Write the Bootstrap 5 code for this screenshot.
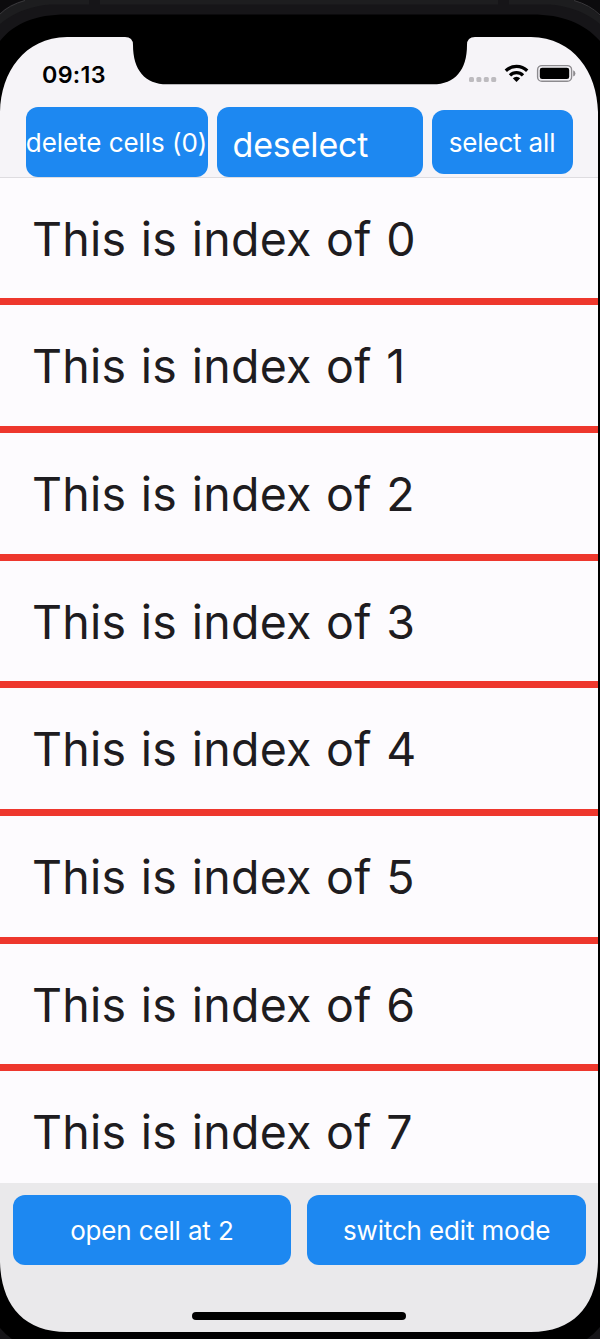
<!DOCTYPE html>
<html lang="en">
<head>
<meta charset="utf-8">
<meta name="viewport" content="width=device-width, initial-scale=1">
<title>Cell list</title>
<link href="https://cdn.jsdelivr.net/npm/bootstrap@5.3.0/dist/css/bootstrap.min.css" rel="stylesheet">
<style>
  body { background: #000; font-family: Inter, sans-serif; }
  .phone { width: 600px; height: 1339px; padding: 37px 2px 7px 0; background: #000; }
  .screen { background: #fdfbfe; }
  .topbar { height: 140.5px; background: #f6f4f8; border-bottom: 1px solid #dedce0; }
  .status { height: 70px; padding: 0 20px 0 42px; }
  .clock { font-size: 23.3px; font-weight: 600; line-height: 75px; letter-spacing: .3px; color: #000; }
  .status-icons { margin-top: 25px; }
  .actions { padding: 0 25px 0 25.5px; gap: 9px; }
  .act { --bs-btn-color: #fff; --bs-btn-bg: #1d88f1; --bs-btn-border-width: 0; --bs-btn-border-radius: 12px;
         --bs-btn-padding-x: 0; --bs-btn-padding-y: 0; --bs-btn-font-size: 26px; --bs-btn-line-height: 72px;
         height: 70px; white-space: nowrap; font-weight: 400; letter-spacing: -.15px; }
  .act-delete { width: 182px; letter-spacing: -.05px; }
  .act-deselect { width: 206px; padding-left: 16px; --bs-btn-font-size: 34px; --bs-btn-line-height: 75px; }
  .act-all { width: 141px; height: 64px; --bs-btn-line-height: 66px; }
  .cell-row { height: 127.7px; flex: none; padding-left: 32px; border-bottom: 7px solid #ee372d;
              font-size: 46.5px; line-height: 122px; letter-spacing: .25px; word-spacing: 1.2px;
              color: #1e1c20; white-space: nowrap; }
  .bottombar { height: 149px; background: #eae9eb; padding: 12px 12px 0 12.5px; }
  .home { width: 214px; height: 8px; margin: 47px auto 0; background: #000; }
</style>
</head>
<body>
<div class="phone position-relative overflow-hidden">
  <div class="screen h-100 d-flex flex-column overflow-hidden">
    <header class="topbar flex-shrink-0">
      <div class="status d-flex justify-content-between">
        <span class="clock">09:13</span>
        <svg width="110" height="24" viewBox="468 62 110 24" class="status-icons">
          <g fill="#bdbbbf"><rect x="469" y="77" width="5" height="5" rx="1.5"/><rect x="476.4" y="77" width="5" height="5" rx="1.5"/><rect x="483.8" y="77" width="5" height="5" rx="1.5"/><rect x="491.2" y="77" width="5" height="5" rx="1.5"/></g>
          <g fill="none" stroke="#000" stroke-width="3.3"><path d="M505.8 70.8a15.3 15.3 0 0 1 21.4 0"/><path d="M510 75.3a9.2 9.2 0 0 1 13 0"/></g>
          <path d="M512.8 78.3a5.3 5.3 0 0 1 7.4 0l-3.7 3.7z"/>
          <rect x="537.6" y="65.6" width="34" height="15.6" rx="4.3" fill="none" stroke="#8d8b8f" stroke-width="1.4"/>
          <rect x="539.8" y="67.8" width="29.4" height="11.2" rx="2.3"/>
          <path d="M573.2 70.2q2.2 1 2.2 3.2t-2.2 3.2z" fill="#8d8b8f"/>
        </svg>
      </div>
      <div class="actions d-flex align-items-center">
        <button class="btn act act-delete">delete cells (0)</button>
        <button class="btn act act-deselect text-start">deselect</button>
        <button class="btn act act-all">select all</button>
      </div>
    </header>
    <main class="flex-grow-1 overflow-hidden d-flex flex-column">
      <div class="cell-row">This is index of 0</div>
      <div class="cell-row">This is index of 1</div>
      <div class="cell-row">This is index of 2</div>
      <div class="cell-row">This is index of 3</div>
      <div class="cell-row">This is index of 4</div>
      <div class="cell-row">This is index of 5</div>
      <div class="cell-row">This is index of 6</div>
      <div class="cell-row">This is index of 7</div>
    </main>
    <footer class="bottombar flex-shrink-0">
      <div class="d-flex gap-3">
        <button class="btn act flex-fill w-50">open cell at 2</button>
        <button class="btn act flex-fill w-50">switch edit mode</button>
      </div>
      <div class="home rounded-pill"></div>
    </footer>
  </div>
  <!-- Device bezel and notch, laid over the screen -->
  <svg class="position-absolute top-0 start-0 pe-none" width="600" height="1339" viewBox="0 0 600 1339">
    <path fill-rule="evenodd" d="M0 0H600V1339H0V1262C1 1303 22 1332 67 1332H531C576 1332 597 1303 598 1262V112C597 72 574 38 531 37H475Q467 37 467 45C467 70 455 84.300 433 84.300H167C145 84.300 133 70 133 45Q133 37 125 37H67C24 38 1 72 0 112Z"/>
    <path fill="#161518" d="M0 0H600V41C584 23 562 14.500 532 14.500H66C36 14.500 14 23 0 41Z"/>
    <path fill="#1d1d1f" d="M25 0H89V4.500H50Q20 7 0 24V14Q10 5 25 0ZM100 0H498V4.500H100ZM509 0H573Q590 6 600 16V24Q580 7 550 4.500H509Z"/>
    <path fill="#0c0b0d" d="M0 0H24Q9 4 0 13ZM600 0H574Q590 5 600 15Z"/>
    <path fill="none" stroke="#39383b" d="M0 14Q9 5 25 .5M600 15Q590 5 574 .5"/>
    <path fill="#161518" d="M0 1328Q5 1334 12 1339H0ZM600 1327Q594 1334 587 1339H600Z"/>
  </svg>
</div>
<script src="https://cdn.jsdelivr.net/npm/bootstrap@5.3.0/dist/js/bootstrap.bundle.min.js"></script>
</body>
</html>
